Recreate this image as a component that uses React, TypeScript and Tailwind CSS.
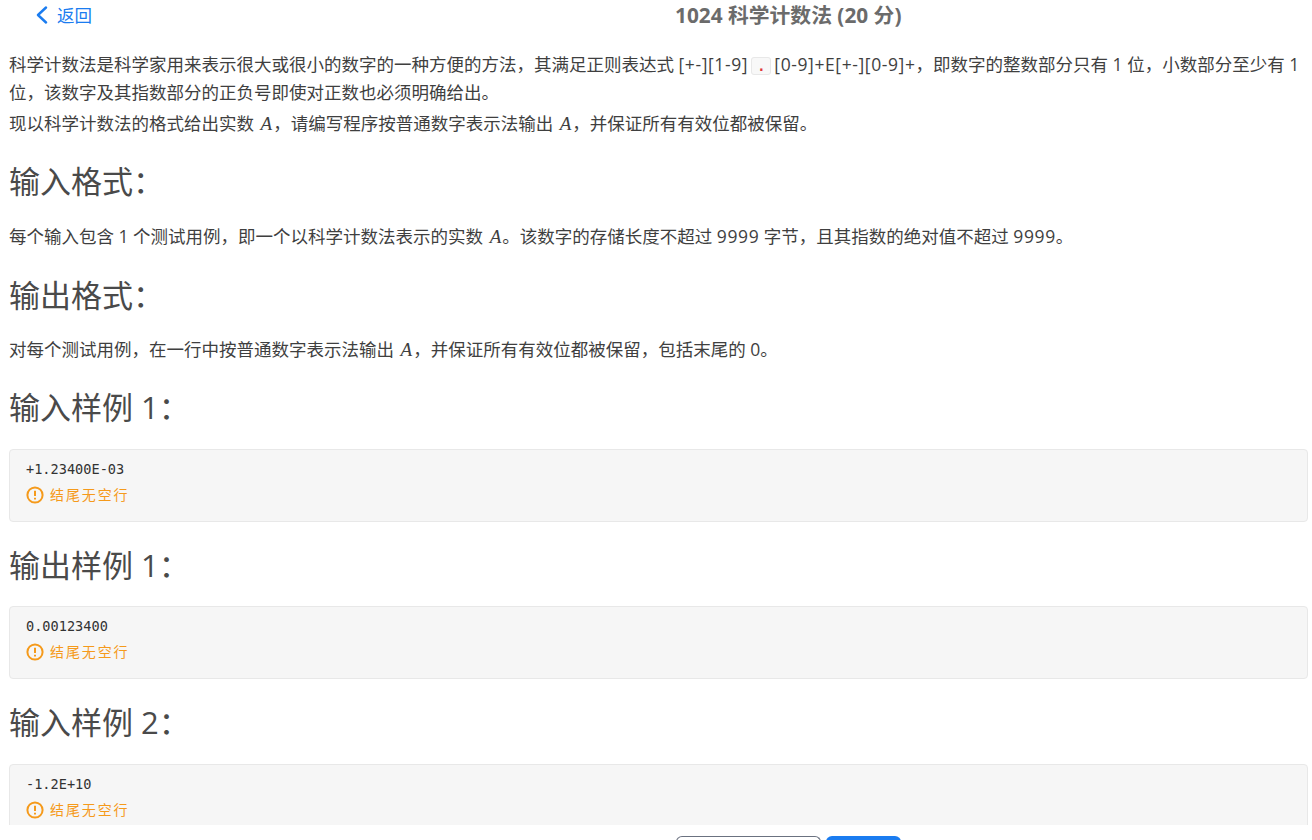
import React from 'react';

const font = "font-['Open_Sans','Noto_Sans_CJK_SC',sans-serif]";

function A() {
  return <span className="ml-[2px] mr-[1px] font-['Liberation_Serif',serif] italic text-[19px]">A</span>;
}

function Latin({ children }: { children: React.ReactNode }) {
  return <span className="tracking-[0.6px]">{children}</span>;
}

function Heading({ children }: { children: React.ReactNode }) {
  return <h2 className="mt-[23px] mb-[21.5px] h-[40px] text-[31px] leading-[40px] text-[#4a4a4a] font-normal">{children}</h2>;
}

function Sample({ text }: { text: string }) {
  return (
    <div className="h-[73px] rounded-[4px] border border-[#e8e8e8] bg-[#f6f6f6] px-[16px] pt-[10px]">
      <div className="font-['DejaVu_Sans_Mono',monospace] text-[13.6px] leading-[18px] text-[#333]">{text}</div>
      <div className="mt-[7px] flex items-center gap-[6px] text-[14px] leading-[20px] tracking-[1.9px] text-[#f59a1b]">
        <svg width="18" height="18" viewBox="0 0 18 18" fill="none" stroke="currentColor" strokeWidth="2">
          <circle cx="9" cy="9" r="7.6" />
          <path d="M9 4.8v5.2M9 11.7v1.7" />
        </svg>
        结尾无空行
      </div>
    </div>
  );
}

export default function App() {
  return (
    <div className={`h-[840px] w-[1312px] overflow-hidden bg-white text-[17.5px] text-[#3f3f3f] ${font}`}>
      <header className="relative flex h-[30px] items-center">
        <a className="ml-[36px] flex items-center text-[#1a7cf0]">
          <svg width="12" height="18" viewBox="0 0 12 18" fill="none" stroke="currentColor" strokeWidth="2.4" strokeLinecap="round" strokeLinejoin="round">
            <path d="M10 1.5 2 9l8 7.5" />
          </svg>
          <span className="ml-[9px] text-[17.5px]">返回</span>
        </a>
        <h1 className="absolute left-[675px] top-[2px] text-[20.8px] leading-[26px] font-bold text-[#6b6b6b]">1024 科学计数法 (20 分)</h1>
      </header>

      <main className="h-[795px] overflow-hidden pl-[9px] pr-[4px] pt-[21px]">
        <p className="leading-[26px]">
          科学计数法是科学家用来表示很大或很小的数字的一种方便的方法，其满足正则表达式 <Latin>[+-][1-9]</Latin>
          <code className="mx-[3px] rounded-[3px] border border-[#e8e8e8] bg-[#f8f8f8] px-[5px] font-['DejaVu_Sans_Mono',monospace] text-[13.6px] font-bold text-[#e0383e]">.</code>
          <Latin>[0-9]+E[+-][0-9]+</Latin>，即数字的整数部分只有 1 位，小数部分至少有 1 位，该数字及其指数部分的正负号即使对正数也必须明确给出。
        </p>
        <p className="mt-[5px] leading-[26px]">
          现以科学计数法的格式给出实数 <A />，请编写程序按普通数字表示法输出 <A />，并保证所有有效位都被保留。
        </p>

        <div className="mt-[24px]">
          <Heading>输入格式：</Heading>
          <p className="mt-[19.5px] leading-[26px]">每个输入包含 1 个测试用例，即一个以科学计数法表示的实数 <A />。该数字的存储长度不超过 <Latin>9999</Latin> 字节，且其指数的绝对值不超过 <Latin>9999</Latin>。</p>
          <div className="mt-[25px]">
            <Heading>输出格式：</Heading>
          </div>
          <p className="mt-[18.5px] leading-[26px]">对每个测试用例，在一行中按普通数字表示法输出 <A />，并保证所有有效位都被保留，包括末尾的 0。</p>
          <div className="mt-[24px]">
            <Heading>输入样例 1：</Heading>
          </div>
          <Sample text="+1.23400E-03" />
          <Heading>输出样例 1：</Heading>
          <Sample text="0.00123400" />
          <Heading>输入样例 2：</Heading>
          <Sample text="-1.2E+10" />
        </div>
      </main>

      <footer className="flex h-[15px] items-start pl-[676px] pt-[11px]">
        <div className="h-[12px] w-[145px] rounded-t-[6px] border border-b-0 border-[#6b7280] bg-white" />
        <div className="ml-[5px] h-[12px] w-[75px] rounded-t-[6px] bg-[#1a7cf0]" />
      </footer>
    </div>
  );
}
